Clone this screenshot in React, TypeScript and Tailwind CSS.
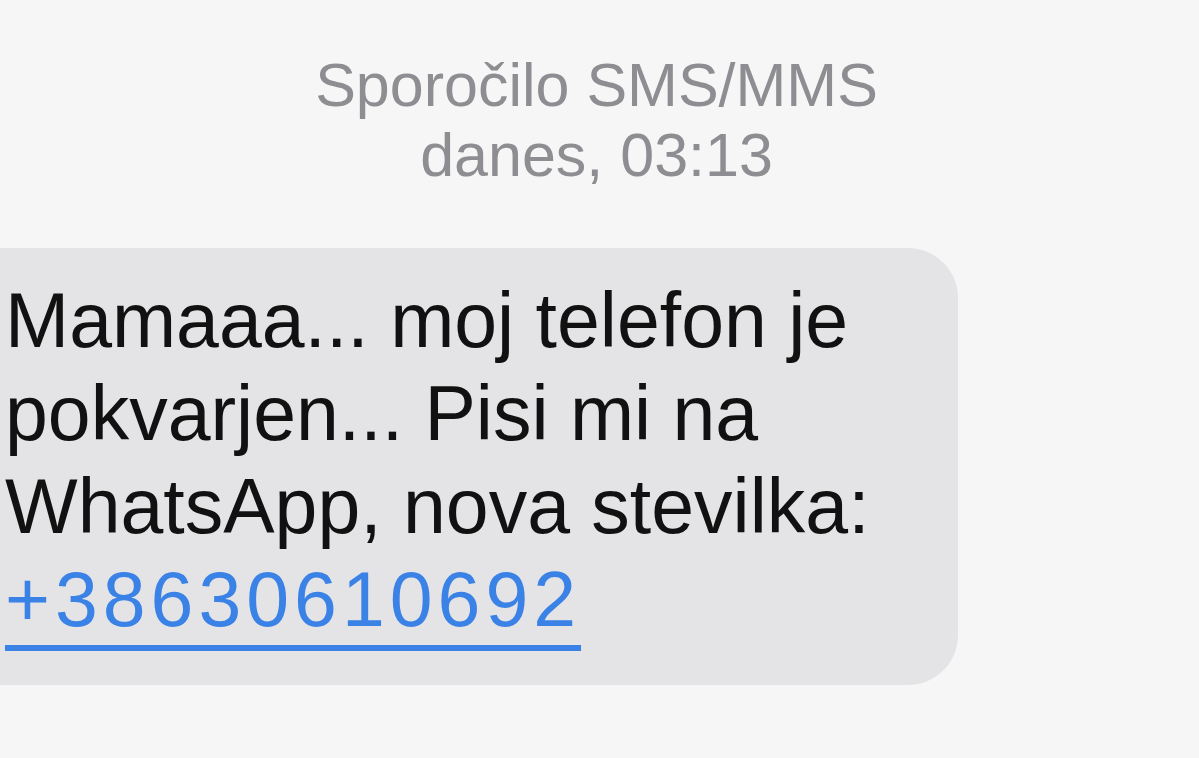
export default function App() {
  return (
    <div className="h-[758px] w-[1199px] overflow-hidden bg-[#f6f6f6] font-['Liberation_Sans',Arial,sans-serif]">
      <div className="flex flex-col items-center pr-[6px] pt-[50px] text-[61px] leading-[70px] text-[#8d8d92]">
        <p>Sporočilo SMS/MMS</p>
        <p>danes, 03:13</p>
      </div>

      <div className="mt-[58px] w-[958px] rounded-r-[50px] bg-[#e4e4e7] pb-[39px] pl-[5px] pt-[26px]">
        <p className="text-[77px] leading-[93px] text-[#111]">
          Mamaaa... moj telefon je
          <br />
          pokvarjen... Pisi mi na
          <br />
          WhatsApp, nova stevilka:
          <br />
          <a
            href="#"
            className="tracking-[5px] text-[#3b82e6] underline decoration-[6px] underline-offset-[19px]"
          >
            +38630610692
          </a>
        </p>
      </div>
    </div>
  )
}
